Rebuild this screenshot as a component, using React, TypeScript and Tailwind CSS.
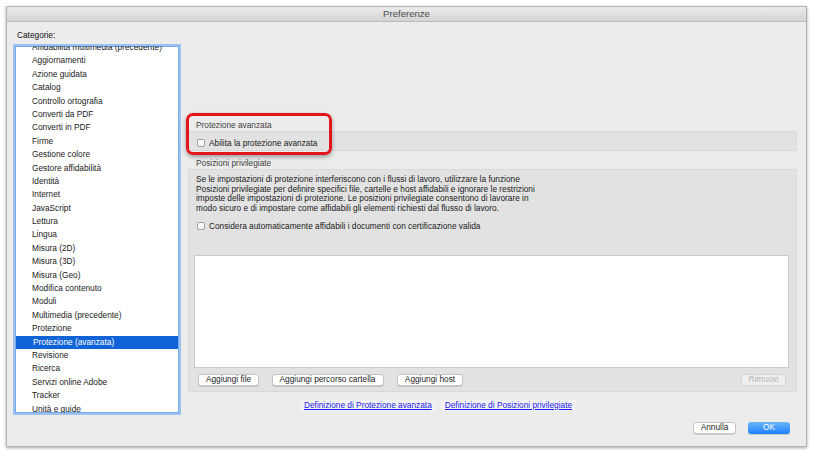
import React from "react";

const items = [
  "Affidabilità multimedia (precedente)",
  "Aggiornamenti",
  "Azione guidata",
  "Catalog",
  "Controllo ortografia",
  "Converti da PDF",
  "Converti in PDF",
  "Firme",
  "Gestione colore",
  "Gestore affidabilità",
  "Identità",
  "Internet",
  "JavaScript",
  "Lettura",
  "Lingua",
  "Misura (2D)",
  "Misura (3D)",
  "Misura (Geo)",
  "Modifica contenuto",
  "Moduli",
  "Multimedia (precedente)",
  "Protezione",
  "Protezione (avanzata)",
  "Revisione",
  "Ricerca",
  "Servizi online Adobe",
  "Tracker",
  "Unità e guide",
];

function Check() {
  return (
    <span className="inline-block w-[8px] h-[8px] border border-[#a2a2a2] rounded-[2px] bg-gradient-to-b from-white to-[#f1f1f1] shrink-0" />
  );
}

function Btn({ children, w, disabled }: { children: React.ReactNode; w: string; disabled?: boolean }) {
  return (
    <div
      className={`${w} h-[12px] flex items-center justify-center rounded-[3px] border leading-none ${
        disabled
          ? "border-[#d6d6d6] bg-[#efefef] text-[#b3b3b3]"
          : "border-[#c4c4c4] bg-white text-[#1c1c1c] shadow-[0_1px_0_rgba(0,0,0,0.12)]"
      }`}
    >
      {children}
    </div>
  );
}

export default function App() {
  return (
    <div
      className="relative w-[814px] h-[452px] bg-white overflow-hidden pt-[6px] pl-[6px] text-[8.3px] text-[#1a1a1a]"
      style={{ fontFamily: '"Liberation Sans", Arial, sans-serif' }}
    >
      <div className="w-[801px] h-[441px] border border-[#b3b3b3] bg-[#ececec] shadow-[0_1px_3px_rgba(0,0,0,0.35)] flex flex-col">
        {/* title bar */}
        <div className="h-[15px] shrink-0 border-b border-[#bcbcbc] bg-gradient-to-b from-[#ececec] to-[#d3d3d3] flex items-center justify-center text-[9.6px] text-[#4b4b4b]">
          Preferenze
        </div>
        {/* body */}
        <div className="flex flex-1">
          {/* left */}
          <div className="w-[181px] shrink-0 pl-[6px] pt-[8px]">
            <div className="leading-[10px] pl-[4px] text-[#111]">Categorie:</div>
            <div className="mt-[4px] w-[168px] h-[371px] bg-white border-[2px] border-[#9cc2f1] shadow-[inset_0_0_0_1px_#7aaae6] overflow-hidden">
              <div className="-mt-[6px] pt-[1px]">
                {items.map((t, i) => (
                  <div
                    key={t}
                    className={`h-[13.4px] leading-[13.4px] pl-[17px] whitespace-nowrap ${
                      i === 22 ? "bg-[#0f63d6] text-white mx-[1px] pl-[16px]" : ""
                    }`}
                  >
                    {t}
                  </div>
                ))}
              </div>
            </div>
          </div>
          {/* right */}
          <div className="w-[609px] shrink-0 pt-[98px]">
            <div className="leading-[10px] pl-[8px] text-[#3f3f3f]">Protezione avanzata</div>
            <div className="mt-[1px] h-[20px] rounded-[2px] bg-[#e2e2e2] border border-[#d9d9d9] flex items-center gap-[4px] pl-[8px] pt-[3px]">
              <Check />
              <span className="leading-[10px]">Abilita la protezione avanzata</span>
            </div>
            <div className="mt-[7px] leading-[10px] pl-[8px] text-[#3f3f3f]">Posizioni privilegiate</div>
            <div className="mt-[1px] rounded-[2px] bg-[#e2e2e2] border border-[#d9d9d9] pt-[5px] pb-[5px]">
              <div className="pl-[7px] leading-[9.5px] whitespace-nowrap">
                <div>Se le impostazioni di protezione interferiscono con i flussi di lavoro, utilizzare la funzione</div>
                <div>Posizioni privilegiate per definire specifici file, cartelle e host affidabili e ignorare le restrizioni</div>
                <div>imposte delle impostazioni di protezione. Le posizioni privilegiate consentono di lavorare in</div>
                <div>modo sicuro e di impostare come affidabili gli elementi richiesti dal flusso di lavoro.</div>
              </div>
              <div className="mt-[8px] pl-[8px] h-[9.5px] flex items-center gap-[4px]">
                <Check />
                <span>Considera automaticamente affidabili i documenti con certificazione valida</span>
              </div>
              <div className="mt-[24px] ml-[5px] mr-[7px] h-[113px] bg-white border border-[#cbcbcb]" />
              <div className="mt-[6px] pl-[9px] pr-[10px] flex items-center">
                <Btn w="w-[61px]">Aggiungi file</Btn>
                <div className="ml-[12.5px]">
                  <Btn w="w-[112px]">Aggiungi percorso cartella</Btn>
                </div>
                <div className="ml-[13.5px]">
                  <Btn w="w-[66px]">Aggiungi host</Btn>
                </div>
                <div className="ml-auto">
                  <Btn w="w-[45px]" disabled>
                    Rimuovi
                  </Btn>
                </div>
              </div>
            </div>
            <div className="mt-[8px] pl-[112px] flex items-center gap-[5px] leading-[11px]">
              <span className="bg-[#f1f1f1] px-[4px] text-[#1b1bee] underline">Definizione di Protezione avanzata</span>
              <span className="bg-[#f1f1f1] px-[4px] text-[#1b1bee] underline">Definizione di Posizioni privilegiate</span>
            </div>
            <div className="mt-[11px] pr-[7px] flex justify-end gap-[12px]">
              <Btn w="w-[43px]">Annulla</Btn>
              <div className="w-[42px] h-[12px] rounded-[3px] bg-gradient-to-b from-[#6ab6fc] to-[#1a7ffb] text-white flex items-center justify-center leading-none shadow-[0_1px_0_rgba(0,0,0,0.15)]">
                OK
              </div>
            </div>
          </div>
        </div>
      </div>
      {/* red highlight */}
      <div className="absolute left-[186px] top-[113px] w-[146px] h-[42px] border-[3px] border-[#e3151c] rounded-[7px] shadow-[0_2px_4px_rgba(0,0,0,0.35)]" />
    </div>
  );
}
